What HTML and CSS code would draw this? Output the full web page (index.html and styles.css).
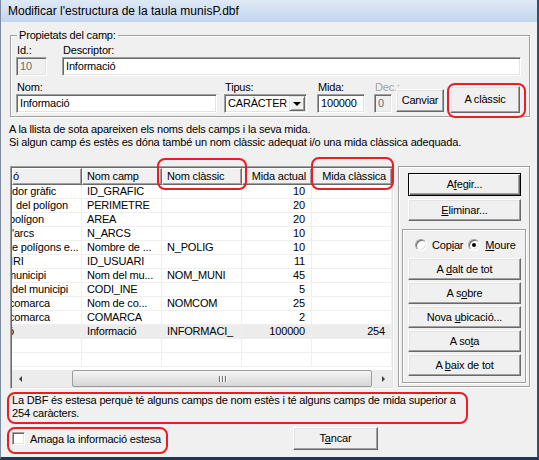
FILE: index.html
```html
<!DOCTYPE html>
<html>
<head>
  <title>Modificar l'estructura de la taula munisP.dbf</title>
  <link rel="stylesheet" href="styles.css">
</head>
<body>
  <div class="window">
    <div class="titlebar">Modificar l'estructura de la taula munisP.dbf</div>

    <div class="client">
      <fieldset class="group">
        <legend>Propietats del camp:</legend>
        <div class="frow">
          <div class="field f-id">
            <div class="lbl">Id.:</div>
            <div class="edit disabled">10</div>
          </div>
          <div class="field f-desc">
            <div class="lbl">Descriptor:</div>
            <div class="edit">Informació</div>
          </div>
        </div>
        <div class="frow frow-2">
          <div class="field f-nom">
            <div class="lbl">Nom:</div>
            <div class="edit">Informació</div>
          </div>
          <div class="field f-tipus">
            <div class="lbl">Tipus:</div>
            <div class="edit combo">
              <span>CARÀCTER</span>
              <span class="drop"><span class="tri-down"></span></span>
            </div>
          </div>
          <div class="field f-mida">
            <div class="lbl">Mida:</div>
            <div class="edit">100000</div>
          </div>
          <div class="field f-dec">
            <div class="lbl grey">Dec.:</div>
            <div class="edit disabled">0</div>
          </div>
          <div class="btn b-canviar">Canviar</div>
          <div class="btn b-classic">A clàssic</div>
        </div>
      </fieldset>

      <div class="info">A la llista de sota apareixen els noms dels camps i la seva mida.</div>
      <div class="info">Si algun camp és estès es dóna també un nom clàssic adequat i/o una mida clàssica adequada.</div>

      <div class="main">
        <div class="list">
          <div class="lv-head">
            <div class="hcell c1">ó</div>
            <div class="hcell c2">Nom camp</div>
            <div class="hcell c3">Nom clàssic</div>
            <div class="hcell c4 num">Mida actual</div>
            <div class="hcell c5 num">Mida clàssica</div>
          </div>
          <div class="lv-body">
            <div class="lrow"><div class="cell c1">dor gràfic</div><div class="cell c2">ID_GRAFIC</div><div class="cell c3"></div><div class="cell c4 num">10</div><div class="cell c5 num"></div></div>
            <div class="lrow"><div class="cell c1 sp">del polígon</div><div class="cell c2">PERIMETRE</div><div class="cell c3"></div><div class="cell c4 num">20</div><div class="cell c5 num"></div></div>
            <div class="lrow"><div class="cell c1 cut">polígon</div><div class="cell c2">AREA</div><div class="cell c3"></div><div class="cell c4 num">20</div><div class="cell c5 num"></div></div>
            <div class="lrow"><div class="cell c1">'arcs</div><div class="cell c2">N_ARCS</div><div class="cell c3"></div><div class="cell c4 num">10</div><div class="cell c5 num"></div></div>
            <div class="lrow"><div class="cell c1">e polígons e...</div><div class="cell c2">Nombre de ...</div><div class="cell c3">N_POLIG</div><div class="cell c4 num">10</div><div class="cell c5 num"></div></div>
            <div class="lrow"><div class="cell c1 cut-s">IRI</div><div class="cell c2">ID_USUARI</div><div class="cell c3"></div><div class="cell c4 num">11</div><div class="cell c5 num"></div></div>
            <div class="lrow"><div class="cell c1 cut-m">municipi</div><div class="cell c2">Nom del mu...</div><div class="cell c3">NOM_MUNI</div><div class="cell c4 num">45</div><div class="cell c5 num"></div></div>
            <div class="lrow"><div class="cell c1">del municipi</div><div class="cell c2">CODI_INE</div><div class="cell c3"></div><div class="cell c4 num">5</div><div class="cell c5 num"></div></div>
            <div class="lrow"><div class="cell c1 cut">comarca</div><div class="cell c2">Nom de co...</div><div class="cell c3">NOMCOM</div><div class="cell c4 num">25</div><div class="cell c5 num"></div></div>
            <div class="lrow"><div class="cell c1 cut">comarca</div><div class="cell c2">COMARCA</div><div class="cell c3"></div><div class="cell c4 num">2</div><div class="cell c5 num"></div></div>
            <div class="lrow selected"><div class="cell c1 cut-o">ó</div><div class="cell c2">Informació</div><div class="cell c3">INFORMACI_</div><div class="cell c4 num">100000</div><div class="cell c5 num">254</div></div>
            <div class="lrow"><div class="cell c1"></div><div class="cell c2"></div><div class="cell c3"></div><div class="cell c4"></div><div class="cell c5"></div></div>
            <div class="lrow"><div class="cell c1"></div><div class="cell c2"></div><div class="cell c3"></div><div class="cell c4"></div><div class="cell c5"></div></div>
          </div>
          <div class="hscroll">
            <div class="arrow"><span class="tri-left"></span></div>
            <div class="thumb"><span class="grip"></span><span class="grip"></span><span class="grip"></span></div>
            <div class="arrow arrow-r"><span class="tri-right"></span></div>
          </div>
        </div>

        <div class="panel">
          <div class="btn pbtn default">A<u>f</u>egir...</div>
          <div class="btn pbtn b-elim"><u>E</u>liminar...</div>
          <div class="inner">
            <div class="radios">
              <span class="radio"></span><span class="rtext">Cop<u>i</u>ar</span>
              <span class="radio on"><span class="dot"></span></span><span class="rtext"><u>M</u>oure</span>
            </div>
            <div class="btn ibtn">A <u>d</u>alt de tot</div>
            <div class="btn ibtn">A s<u>o</u>bre</div>
            <div class="btn ibtn">Nova <u>u</u>bicació...</div>
            <div class="btn ibtn">A so<u>t</u>a</div>
            <div class="btn ibtn">A <u>b</u>aix de tot</div>
          </div>
        </div>
      </div>

      <div class="msg">La DBF és estesa perquè té alguns camps de nom estès i té alguns camps de mida superior a<br>254 caràcters.</div>

      <div class="bottom">
        <div class="chk"><span class="box"></span><span>Amaga la informació estesa</span></div>
        <div class="btn b-tancar">T<u>a</u>ncar</div>
      </div>
    </div>

    <!-- red highlights drawn over the dialog -->
    <div class="mark m-classic"></div>
    <div class="mark m-nom"></div>
    <div class="mark m-mida"></div>
    <div class="mark m-msg"></div>
    <div class="mark m-chk"></div>
  </div>
</body>
</html>
```

FILE: styles.css
```css
* { box-sizing: border-box; }
body { margin: 0; background: #f0f0f0; font-family: "Liberation Sans", Arial, sans-serif; font-size: 11px; letter-spacing: -0.18px; color: #000; }

.window {
  position: relative;
  width: 539px;
  height: 460px;
  background: #f0f0f0;
  border-left: 1px solid #7d8c9e;
  border-right: 2px solid #3e4e62;
  border-bottom: 3px solid #23344e;
  overflow: hidden;
}
.titlebar {
  height: 22px;
  padding-left: 7px;
  line-height: 23px;
  font-size: 12px;
  letter-spacing: 0;
  background: linear-gradient(#dfe9f6, #c3d6ee);
}
.client { padding: 7px 8px 0 8px; }

/* group box */
.group {
  margin: 0 0 0 1px;
  width: 520px;
  padding: 2px 4px 3px 5px;
  border: 1px solid #a0a0a0;
  box-shadow: inset 1px 1px #fff, 1px 1px #fff;
}
.group legend { margin-left: 1px; padding: 0 2px; line-height: 13px; background: #f0f0f0; }
.frow { display: flex; align-items: flex-end; }
.frow-2 { margin-top: 5px; }
.field { display: flex; flex-direction: column; }
.lbl { height: 13px; line-height: 13px; padding-left: 1px; white-space: nowrap; }
.grey { color: #a0a0a0; }

.edit {
  height: 19px;
  background: #fff;
  border: 1px solid;
  border-color: #a0a0a0 #fff #fff #a0a0a0;
  box-shadow: inset 1px 1px #696969, inset -1px -1px #e3e3e3;
  padding: 0 3px;
  line-height: 17px;
  white-space: nowrap;
  overflow: hidden;
}
.edit.disabled { background: #f0f0f0; color: #6d6d6d; }

.f-id { width: 31px; }
.f-desc { width: 459px; margin-left: 15px; }
.f-nom { width: 201px; }
.f-tipus { width: 83px; margin-left: 7px; }
.f-mida { width: 48px; margin-left: 10px; }
.f-dec { width: 18px; margin-left: 9px; }

.combo { display: flex; justify-content: space-between; padding-right: 1px; }
.drop {
  width: 16px;
  height: 15px;
  margin-top: 1px;
  background: #f0f0f0;
  border: 1px solid;
  border-color: #e3e3e3 #696969 #696969 #e3e3e3;
  box-shadow: inset 1px 1px #fff, inset -1px -1px #a0a0a0;
  display: flex;
  align-items: center;
  justify-content: center;
}
.tri-down { width: 0; height: 0; border-left: 4px solid transparent; border-right: 4px solid transparent; border-top: 4px solid #000; margin-top: 1px; }

/* buttons */
.btn {
  height: 22px;
  background: #f0f0f0;
  border: 1px solid;
  border-color: #fff #696969 #696969 #fff;
  box-shadow: inset -1px -1px #a0a0a0, inset 1px 1px #e3e3e3;
  text-align: center;
  line-height: 20px;
  white-space: nowrap;
}
.b-canviar { width: 48px; height: 23px; line-height: 21px; margin-left: 4px; margin-bottom: 1px; }
.b-classic { width: 70px; height: 27px; line-height: 25px; margin-left: 6px; }

.info { line-height: 13px; }
.group + .info { margin-top: 6px; }

/* list view */
.main { display: flex; margin-top: 17px; margin-left: 1px; }
.list {
  width: 384px;
  height: 223px;
  background: #fff;
  border: 1px solid;
  border-color: #a0a0a0 #fff #fff #a0a0a0;
  box-shadow: inset 1px 1px #696969, inset -1px -1px #e3e3e3;
  padding: 1px;
  display: flex;
  flex-direction: column;
}
.lv-head { display: flex; height: 17px; flex: none; }
.hcell {
  border: 1px solid;
  border-color: #fff #696969 #696969 #fff;
  box-shadow: inset -1px -1px #a0a0a0;
  background: #f0f0f0;
  padding: 0 4px;
  line-height: 15px;
  white-space: nowrap;
  overflow: hidden;
}
.c1 { width: 70px; flex: none; }
.c2 { width: 80px; flex: none; }
.c3 { width: 80px; flex: none; }
.c4 { width: 70px; flex: none; }
.c5 { width: 80px; flex: none; }
.num { text-align: right; }
.hcell.num { padding-right: 5px; }
.hcell.c1 { padding-left: 0; }

.lv-body { height: 185px; overflow: hidden; flex: none; }
.lrow { display: flex; height: 14px; }
.cell {
  height: 14px;
  line-height: 13px;
  border-right: 1px solid #efefef;
  border-bottom: 1px solid #efefef;
  padding: 0 5px;
  white-space: nowrap;
  overflow: hidden;
}
.cell.c1 { padding-left: 0; }
.cell.num { padding-right: 6px; }
.cell.sp { padding-left: 4px; }
.cell.cut { text-indent: -3px; }
.cell.cut-m { text-indent: -5px; }
.cell.cut-s { text-indent: -2px; }
.cell.cut-o { text-indent: -4px; }
.lrow.selected { background: #ececec; }

.hscroll { display: flex; height: 17px; flex: none; background: #ececec; }
.arrow { width: 17px; flex: none; display: flex; align-items: center; justify-content: center; }
.arrow-r { margin-left: 3px; }
.tri-left { width: 0; height: 0; border-top: 3px solid transparent; border-bottom: 3px solid transparent; border-right: 3px solid #404040; }
.tri-right { width: 0; height: 0; border-top: 3px solid transparent; border-bottom: 3px solid transparent; border-left: 3px solid #404040; }
.thumb {
  width: 300px;
  margin-left: 43px;
  border: 1px solid #9c9c9c;
  border-radius: 2px;
  background: linear-gradient(#f6f6f6, #e2e2e2 60%, #d8d8d8);
  display: flex;
  align-items: center;
  justify-content: center;
  gap: 2px;
}
.grip { width: 1px; height: 6px; background: #6e6e6e; box-shadow: 1px 0 #fff; }

/* right side panel */
.panel {
  width: 132px;
  height: 221px;
  margin-left: 4px;
  border: 1px solid #a0a0a0;
  box-shadow: inset 1px 1px #fff, 1px 1px #fff;
  padding: 6px 3px 3px 3px;
}
.pbtn { width: 113px; margin-left: 6px; }
.default { height: 23px; border: 1px solid #000; box-shadow: inset 1px 1px #fff, inset -1px -1px #696969, inset -2px -2px #a0a0a0; line-height: 21px; }
.b-elim { margin-top: 3px; }
.inner {
  margin-top: 8px;
  width: 124px;
  height: 154px;
  border: 1px solid #a0a0a0;
  box-shadow: inset 1px 1px #fff, 1px 1px #fff;
  padding: 8px 4px 0 5px;
}
.radios { display: flex; align-items: center; height: 13px; padding-left: 7px; }
.radio {
  width: 12px;
  height: 12px;
  border-radius: 50%;
  background: #fff;
  border: 1px solid;
  border-color: #a0a0a0 #fff #fff #a0a0a0;
  box-shadow: inset 1px 1px #696969, inset -1px -1px #e3e3e3;
  display: flex;
  align-items: center;
  justify-content: center;
  flex: none;
}
.dot { width: 4px; height: 4px; border-radius: 50%; background: #000; }
.rtext { margin-left: 5px; margin-right: 5px; }
.ibtn { width: 113px; margin-top: 2px; }
.radios + .ibtn { margin-top: 7px; }

/* bottom */
.msg { margin-top: 5px; padding-left: 3px; line-height: 13px; white-space: nowrap; }
.bottom { display: flex; align-items: center; margin-top: 7px; }
.chk { width: 284px; padding-left: 3px; display: flex; align-items: center; gap: 5px; }
.box {
  width: 13px;
  height: 13px;
  background: #fff;
  border: 1px solid;
  border-color: #a0a0a0 #fff #fff #a0a0a0;
  box-shadow: inset 1px 1px #696969, inset -1px -1px #e3e3e3;
}
.b-tancar { width: 85px; height: 23px; line-height: 21px; }

/* red annotation outlines */
.mark { position: absolute; border: 2px solid #ed1c24; border-radius: 8px; }
.m-classic { left: 446px; top: 83px; width: 79px; height: 35px; }
.m-nom { left: 156px; top: 158px; width: 90px; height: 32px; }
.m-mida { left: 310px; top: 157px; width: 83px; height: 33px; }
.m-msg { left: 6px; top: 392px; width: 461px; height: 32px; }
.m-chk { left: 6px; top: 427px; width: 161px; height: 27px; }
```
